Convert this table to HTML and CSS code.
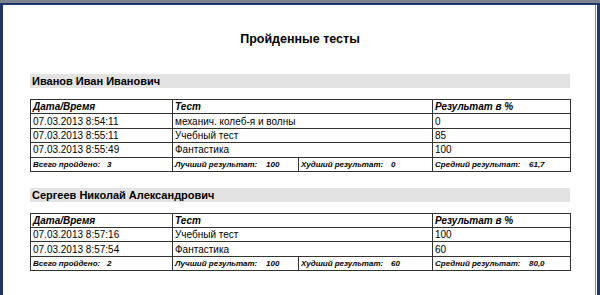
FILE: index.html
```html
<!DOCTYPE html>
<html lang="ru">
<head>
<meta charset="utf-8">
<link rel="stylesheet" href="styles.css">
</head>
<body>
<div class="frame">
  <div class="page">
    <h1 class="title">Пройденные тесты</h1>

    <section class="person">
      <h2 class="name">Иванов Иван Иванович</h2>
      <table class="results">
        <colgroup><col class="c1"><col class="c2"><col class="c3"><col class="c4"></colgroup>
        <tr class="head"><td>Дата/Время</td><td colspan="2">Тест</td><td>Результат в %</td></tr>
        <tr><td>07.03.2013 8:54:11</td><td colspan="2">механич. колеб-я и волны</td><td>0</td></tr>
        <tr><td>07.03.2013 8:55:11</td><td colspan="2">Учебный тест</td><td>85</td></tr>
        <tr><td>07.03.2013 8:55:49</td><td colspan="2">Фантастика</td><td>100</td></tr>
        <tr class="foot">
          <td><span class="lbl l1">Всего пройдено:</span>3</td>
          <td><span class="lbl l2">Лучший результат:</span>100</td>
          <td><span class="lbl l3">Худший результат:</span>0</td>
          <td><span class="lbl l4">Средний результат:</span>61,7</td>
        </tr>
      </table>
    </section>

    <section class="person">
      <h2 class="name">Сергеев Николай Александрович</h2>
      <table class="results">
        <colgroup><col class="c1"><col class="c2"><col class="c3"><col class="c4"></colgroup>
        <tr class="head"><td>Дата/Время</td><td colspan="2">Тест</td><td>Результат в %</td></tr>
        <tr><td>07.03.2013 8:57:16</td><td colspan="2">Учебный тест</td><td>100</td></tr>
        <tr><td>07.03.2013 8:57:54</td><td colspan="2">Фантастика</td><td>60</td></tr>
        <tr class="foot">
          <td><span class="lbl l1">Всего пройдено:</span>2</td>
          <td><span class="lbl l2">Лучший результат:</span>100</td>
          <td><span class="lbl l3">Худший результат:</span>60</td>
          <td><span class="lbl l4">Средний результат:</span>80,0</td>
        </tr>
      </table>
    </section>
  </div>
</div>
</body>
</html>
```

FILE: styles.css
```css
html, body {
  margin: 0;
  padding: 0;
}
body {
  background: #7b838f;
  font-family: "Liberation Sans", Arial, sans-serif;
  color: #000;
  height: 295px;
  overflow: hidden;
}
.frame {
  margin-top: 3px;
  height: 292px;
  box-sizing: border-box;
  background: #ffffff;
  border-left: 3px solid #1f3768;
  border-top: 2px solid #1f3768;
  border-right: 3px solid #1f3768;
}
.page {
  height: 100%;
  box-sizing: border-box;
  margin-right: 1px;
  border-right: 1px solid #8a8a8a;
  padding: 27px 0 0 27px;
}
.title {
  margin: 0;
  width: 540px;
  text-align: center;
  font-size: 12.5px;
  font-weight: bold;
  line-height: 15px;
}
.person {
  width: 540px;
}
.person + .person {
  margin-top: 16px;
}
.title + .person {
  margin-top: 27px;
}
.name {
  margin: 0 0 11px 0;
  background: #e3e3e3;
  height: 14px;
  font-size: 11px;
  font-weight: bold;
  line-height: 15px;
  padding-left: 2px;
}
.results {
  border-collapse: collapse;
  table-layout: fixed;
  width: 540px;
}
.c1 { width: 142px; }
.c2 { width: 126px; }
.c3 { width: 134px; }
.c4 { width: 138px; }
.results td {
  border: 1px solid #333;
  padding: 0 0 0 2px;
  height: 13.4px;
  line-height: 13px;
  font-size: 10px;
  white-space: nowrap;
  overflow: hidden;
}
.head td {
  font-weight: bold;
  font-style: italic;
  font-size: 10px;
}
.foot td {
  font-weight: bold;
  font-style: italic;
  font-size: 8px;
  height: 12.6px;
}
.lbl {
  display: inline-block;
}
.l1 { width: 74px; }
.l2 { width: 91px; }
.l3 { width: 90px; }
.l4 { width: 94px; }
```
